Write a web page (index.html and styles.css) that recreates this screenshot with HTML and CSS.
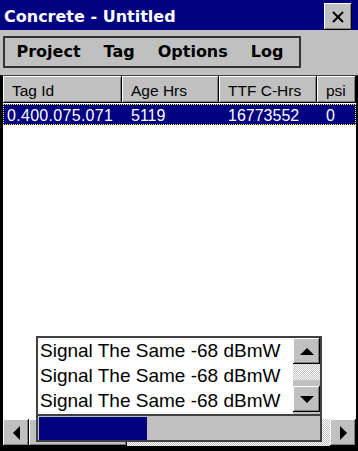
FILE: index.html
```html
<!DOCTYPE html>
<html lang="en">
<head>
    <meta charset="UTF-8">
    <meta name="viewport" content="width=device-width, initial-scale=1.0">
    <title>Concrete - Untitled</title>
    <link rel="stylesheet" href="styles.css">
</head>
<body>
    <div class="window">
        <header class="titlebar">
            <span class="title">Concrete - Untitled</span>
            <button class="close-btn raised" aria-label="Close">
                <svg width="12" height="12" viewBox="0 0 12 12"><path d="M1 1L11 11M11 1L1 11" stroke="#000" stroke-width="2"/></svg>
            </button>
        </header>

        <div class="menubar">
            <nav class="menu">
                <span class="menu-item">Project</span>
                <span class="menu-item">Tag</span>
                <span class="menu-item">Options</span>
                <span class="menu-item">Log</span>
            </nav>
        </div>

        <div class="listview">
            <div class="list-header">
                <div class="col col-id raised">Tag Id</div>
                <div class="col col-age raised">Age Hrs</div>
                <div class="col col-ttf raised">TTF C-Hrs</div>
                <div class="col col-psi raised">psi</div>
            </div>
            <div class="list-row selected">
                <div class="cell col-id">0.400.075.071</div>
                <div class="cell col-age">5119</div>
                <div class="cell col-ttf">16773552</div>
                <div class="cell col-psi">0</div>
            </div>
            <div class="list-body"></div>
            <div class="hscroll">
                <div class="sb-btn raised">
                    <svg width="7" height="14" viewBox="0 0 7 14"><polygon points="7,0 7,14 0,7" fill="#000"/></svg>
                </div>
                <div class="sb-track dither">
                    <div class="sb-thumb raised"></div>
                </div>
                <div class="sb-btn raised">
                    <svg width="7" height="14" viewBox="0 0 7 14"><polygon points="0,0 0,14 7,7" fill="#000"/></svg>
                </div>
            </div>
        </div>

        <!-- signal log popup over the list -->
        <div class="popup">
            <div class="log-box">
                <ul class="log-lines">
                    <li>Signal The Same -68 dBmW</li>
                    <li>Signal The Same -68 dBmW</li>
                    <li>Signal The Same -68 dBmW</li>
                </ul>
                <div class="vscroll">
                    <div class="vs-btn raised">
                        <svg width="14" height="7" viewBox="0 0 14 7"><polygon points="0,7 7,0 14,7" fill="#000"/></svg>
                    </div>
                    <div class="vs-track">
                        <div class="vs-space dither"></div>
                        <div class="vs-thumb"></div>
                    </div>
                    <div class="vs-btn raised">
                        <svg width="14" height="7" viewBox="0 0 14 7"><polygon points="0,0 14,0 7,7" fill="#000"/></svg>
                    </div>
                </div>
            </div>
            <div class="progress">
                <div class="progress-fill" style="width: 38.6%"></div>
            </div>
        </div>
    </div>
</body>
</html>
```

FILE: styles.css
```css
* {
    margin: 0;
    padding: 0;
    box-sizing: border-box;
}

body {
    width: 358px;
    height: 451px;
    overflow: hidden;
    background-color: #c0c0c0;
    font-family: "Liberation Sans", Arial, sans-serif;
    color: #000;
}

.window {
    position: relative;
    width: 358px;
    height: 451px;
    display: flex;
    flex-direction: column;
    background-color: #c0c0c0;
}

.raised {
    background-color: #c0c0c0;
    box-shadow: inset -1px -1px #000, inset 1px 1px #fff, inset -2px -2px #808080;
}

.dither {
    background-image: repeating-conic-gradient(#fff 0 25%, #c0c0c0 0 50%);
    background-size: 2px 2px;
}

/* title bar */
.titlebar {
    height: 30px;
    flex-shrink: 0;
    background-color: #000080;
    display: flex;
    justify-content: space-between;
    align-items: flex-start;
    padding: 3px 6px 0 4px;
}

.title {
    font-family: "DejaVu Sans", sans-serif;
    font-weight: bold;
    font-size: 16px;
    line-height: 27px;
    color: #fff;
}

.close-btn {
    width: 28px;
    height: 27px;
    border: none;
    display: flex;
    align-items: center;
    justify-content: center;
}

/* menu bar */
.menubar {
    height: 45px;
    flex-shrink: 0;
    padding: 6px 0 0 3px;
}

.menu {
    width: 298px;
    height: 32px;
    border: 2px solid #333;
    display: flex;
}

.menu-item {
    padding: 0 11.5px;
    font-family: "DejaVu Sans", sans-serif;
    font-weight: bold;
    font-size: 16px;
    line-height: 28px;
}

/* list view */
.listview {
    flex: 1;
    display: flex;
    flex-direction: column;
    background-color: #fff;
    border-top: 1px solid #404040;
    border-left: 3px solid #000;
    border-right: 2px solid #000;
    border-bottom: 5px solid #000;
}

.list-header {
    height: 27px;
    display: flex;
    flex-shrink: 0;
}

.col-id { width: 119px; }
.col-age { width: 97px; }
.col-ttf { width: 98px; }
.col-psi { flex: 1; }

.col {
    padding: 3px 0 0 9px;
    font-size: 15.5px;
    line-height: 24px;
    white-space: nowrap;
}

.list-row {
    height: 21px;
    margin-top: 1px;
    display: flex;
    flex-shrink: 0;
}

.list-row.selected {
    background-color: #000080;
    color: #fff;
    outline: 1px dotted #ffff00;
    outline-offset: -1px;
}

.cell {
    padding: 2px 0 0 9px;
    font-size: 16px;
    line-height: 19px;
    white-space: nowrap;
}

.cell.col-id {
    padding-left: 4px;
    letter-spacing: 0.3px;
}

.list-body {
    flex: 1;
}

.hscroll {
    height: 27px;
    display: flex;
    flex-shrink: 0;
}

.sb-btn {
    width: 26px;
    display: flex;
    align-items: center;
    justify-content: center;
}

.sb-track {
    flex: 1;
}

.sb-thumb {
    width: 98px;
    height: 100%;
}

/* signal log popup */
.popup {
    position: absolute;
    left: 36px;
    top: 336px;
    width: 286px;
}

.log-box {
    height: 78px;
    display: flex;
    background-color: #fff;
    border: 2px solid #404040;
    border-bottom: none;
}

.log-lines {
    flex: 1;
    list-style: none;
    padding-left: 2px;
}

.log-lines li {
    height: 25px;
    font-size: 19px;
    line-height: 25px;
    white-space: nowrap;
}

.vscroll {
    width: 27px;
    display: flex;
    flex-direction: column;
    background-color: #c0c0c0;
    padding-bottom: 2px;
}

.vs-btn {
    height: 26px;
    display: flex;
    align-items: center;
    justify-content: center;
}

.vs-track {
    flex: 1;
    display: flex;
    flex-direction: column;
}

.vs-space {
    flex: 1;
}

.vs-thumb {
    height: 6px;
    background-color: #c0c0c0;
}

.progress {
    height: 28px;
    padding: 1px 1px 0 1px;
    border: 2px solid #404040;
    background-color: #c0c0c0;
}

.progress-fill {
    height: 100%;
    background-color: #000080;
}
```
